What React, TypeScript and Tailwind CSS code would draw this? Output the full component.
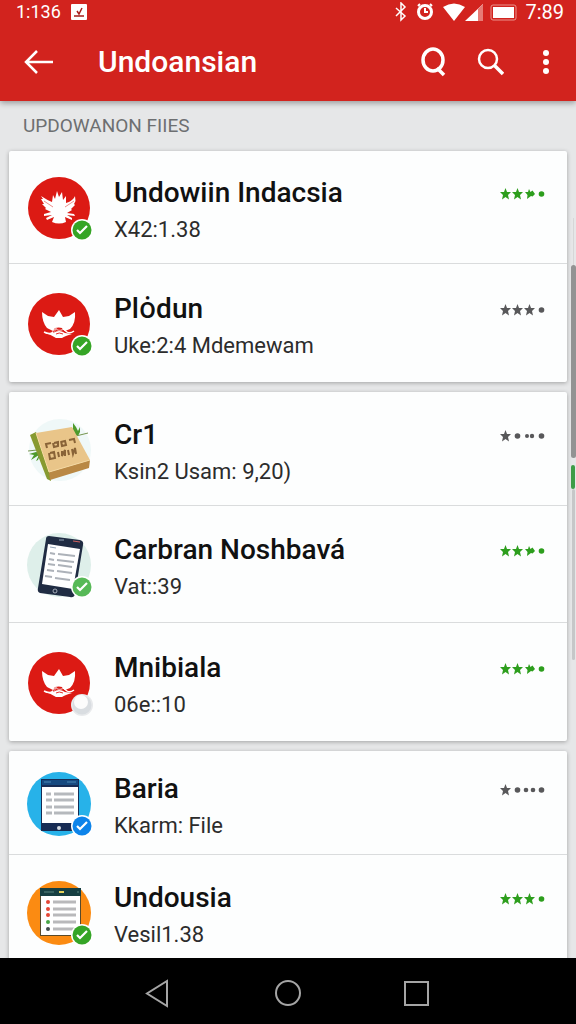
import React from 'react'
import clsx from 'clsx'

type Mark = 'star' | 'half' | 'dot' | 'pair' | 'twin'
type Emblem = 'eagle' | 'crest' | 'box' | 'phone' | 'sheet' | 'list'
type Badge = 'green' | 'light' | 'blue' | 'empty'

interface FileItem {
  title: string
  detail: string
  emblem: Emblem
  badge?: Badge
  marks: Mark[]
  active?: boolean
  size: string
}

const groups: FileItem[][] = [
  [
    {
      title: 'Undowiin Indacsia',
      detail: 'X42:1.38',
      emblem: 'eagle',
      badge: 'green',
      marks: ['star', 'star', 'half', 'dot'],
      active: true,
      size: 'h-[113px]'
    },
    {
      title: 'Plȯdun',
      detail: 'Uke:2:4 Mdemewam',
      emblem: 'crest',
      badge: 'green',
      marks: ['star', 'star', 'star', 'dot'],
      size: 'h-[118px]'
    }
  ],
  [
    {
      title: 'Cr1',
      detail: 'Ksin2 Usam: 9,20)',
      emblem: 'box',
      marks: ['star', 'dot', 'pair', 'dot'],
      size: 'h-[114px]'
    },
    {
      title: 'Carbran Noshbavá',
      detail: 'Vat::39',
      emblem: 'phone',
      badge: 'light',
      marks: ['star', 'star', 'half', 'dot'],
      active: true,
      size: 'h-[117px]'
    },
    {
      title: 'Mnibiala',
      detail: '06e::10',
      emblem: 'crest',
      badge: 'empty',
      marks: ['star', 'star', 'half', 'dot'],
      active: true,
      size: 'h-[118px]'
    }
  ],
  [
    {
      title: 'Baria',
      detail: 'Kkarm: File',
      emblem: 'sheet',
      badge: 'blue',
      marks: ['star', 'dot', 'twin', 'dot'],
      size: 'h-[104px]'
    },
    {
      title: 'Undousia',
      detail: 'Vesil1.38',
      emblem: 'list',
      badge: 'green',
      marks: ['star', 'star', 'star', 'dot'],
      active: true,
      size: 'h-[114px]'
    }
  ]
]

const badgeColors: Record<Badge, string> = {
  green: '#35a526',
  light: '#57b957',
  blue: '#0d84ea',
  empty: '#d9dde1'
}

const Eagle = () => (
  <>
    <circle cx="31" cy="32" r="31" fill="#dc1a14" />
    <path
      fill="#fff"
      d="M24 26 25 19 27 23 29 15 31 21 34 16 35 24 38 20 38 27C42 26 46 23 47 20L47.500 25 46 28 47 29 43 33 44 34 39 37 46 38 47 40 39 39 44 42 44 44 37 41 38 46Q31 49 24 46L26 41 19 44 18 42 24 39 16 40 16 38 23 36 17 33 18 32 14 28 16 28 13 23 15 23 13 20Q19 24 24 26Z"
    />
    <path d="M16 25 25 31M46 25 37 31" stroke="#dc1a14" strokeWidth=".5" />
  </>
)

const Crest = () => (
  <>
    <circle cx="31" cy="32" r="31" fill="#dc1a14" />
    <path
      fill="#fff"
      d="M14 20 20 24 26 25 31 18 35 25 41 24 47 20Q48 31 42 37L37 39 34 36Q31 35 27 36L25 39 19 36Q14 30 14 20Z"
    />
    <path d="M16 40Q22 43 25 40L28 37Q32 40 35 37L39 40Q42 42 46 39" fill="none" stroke="#fff" strokeWidth="1.500" />
    <path fill="#fff" d="M17 41 25 41Q31 37 37 41L44 42Q37 44 34 46L28 46Q24 43 17 41Z" />
    <path d="M25 40Q27 37 31 38Q35 37 37 40M28 42Q31 40 35 42" fill="none" stroke="#dc1a14" strokeWidth=".9" />
  </>
)

const Box = () => (
  <>
    <circle cx="32" cy="32" r="31" fill="#eff8f8" />
    <path fill="#4e9a2c" d="M46 17 43 10 45 11 45 5 48 9 50 13 52 9 52 14 50 18ZM8 34 1 36 6 37 3 42 11 37 8 43 10 42 13 35Z" />
    <path d="M48 18 60 15M0 33 9 32" stroke="#75954f" />
    <path fill="#879a31" d="M2 17 8 14 22 51 23 63 19 61Z" />
    <path fill="#e9c589" d="M8 15 44 9 62 42 21 54Z" />
    <path fill="#b98844" d="M21 54 62 42 61 50 22 62Z" />
    <path d="M8 15 21 54 62 42" fill="none" stroke="#f5d9a2" />
    <path
      d="m19 30-1-4 5-1m3 0 4-1v4l-4 1-1-4m8-1 4-1 1 4-4 1-1-5m8-1 5-1 1 4M22 35l4-1 1 6-5 1-1-6m9-1 1 5m3-6v5l3-6v6m3-6 1 5m3-6 1 5 2-6 1 6"
      fill="none"
      stroke="#896337"
      strokeWidth="2"
    />
  </>
)

const Phone = () => (
  <>
    <circle cx="31" cy="32" r="32" fill="#deefea" />
    <path
      fill="#202c43"
      d="M21 3 52 7Q56 8 55 12L47 61Q46 65 42 64L12 60Q9 59 10 55L18 6Q18 3 21 3Z"
    />
    <path fill="#fff" d="m20 11 32 5-7 40-31-5Z" />
    <path d="m22 14 6 1M31 7h5" stroke="#93a4b8" />
    <path d="m22 20 5 1m3 0 17 2M21 26l5 1m3 0 17 2M20 31l7 1m3 0 14 2M19 37l7 1m3 0 15 2M17 43l7 1m3 1 15 2" stroke="#adb2b9" strokeWidth="2" />
    <path d="m45 8 7 1" stroke="#d2605d" />
    <circle cx="27" cy="58" r="2" fill="none" stroke="#c4ccd4" strokeWidth=".8" />
  </>
)

const Sheet = () => (
  <>
    <circle cx="31" cy="32" r="32" fill="#27b2e9" />
    <path fill="#172c54" d="M13 7h38v52H13z" />
    <path fill="#174a80" d="M14 8h36v5H14z" />
    <path fill="#fff" d="M14 15h36v36H14z" />
    <path d="M16 10h7m16 0h9" stroke="#4c89b6" />
    <path d="M18 22h5m3 0h20M18 28h6m2 0h20M18 35h6m2 0h20M18 41h6m2 0h20" stroke="#b6b9bd" strokeWidth="3" />
    <circle cx="31" cy="56" r="2" fill="#d4dbe1" />
  </>
)

const List = () => (
  <>
    <circle cx="31" cy="32" r="32" fill="#fb8b12" />
    <path fill="#594a2b" d="M12 7h41v48H12z" />
    <path fill="#fff" d="M13 14h39v40H13z" />
    <path fill="#173f42" d="M12 7h41v8H12z" />
    <path d="M16 11h10M49 11h2" stroke="#5d8880" />
    <path d="M31 11h5" stroke="#e6d35a" strokeWidth="2" />
    <path d="M25 21h23M25 28h23M25 34h23M25 41h23M25 48h23" stroke="#b9b9bb" strokeWidth="3" />
    <g fill="#e54634">
      <circle cx="20" cy="21" r="2" />
      <circle cx="20" cy="28" r="2" />
      <circle cx="20" cy="34" r="2" />
    </g>
    <circle cx="20" cy="41" r="2" fill="#48a645" />
    <circle cx="20" cy="48" r="2" fill="#414b4b" />
  </>
)

const emblems: Record<Emblem, React.FC> = {
  eagle: Eagle,
  crest: Crest,
  box: Box,
  phone: Phone,
  sheet: Sheet,
  list: List
}

const Avatar: React.FC<{ emblem: Emblem; badge?: Badge }> = ({ emblem, badge }) => {
  const Drawing = emblems[emblem]

  return (
    <svg viewBox="-1 -1 66 66" className="size-[66px] shrink-0" aria-hidden="true">
      <Drawing />
      {badge && (
        <g>
          <circle cx="54" cy="54" r="11" fill={badge === 'empty' ? '#e8eaec' : '#fff'} />
          <circle cx="54" cy="54" r="9.500" fill={badgeColors[badge]} />
          {badge === 'empty' ? (
            <circle cx="53" cy="51" r="7" fill="#fcfcfc" />
          ) : (
            <path d="m49 54 3 3 7-7" fill="none" stroke="#fff" strokeWidth="2.200" />
          )}
        </g>
      )}
    </svg>
  )
}

const Rating: React.FC<{ marks: Mark[]; active?: boolean }> = ({ marks, active }) => (
  <svg
    viewBox="0 0 48 12"
    className={clsx('mt-[14px] h-3 w-12 shrink-0', active ? 'text-[#2d9e1d]' : 'text-[#58585a]')}
    fill="currentColor"
    role="img"
    aria-label={`${marks.filter((mark) => mark === 'star').length} / ${marks.length}`}
  >
    {marks.map((mark, i) => (
      <g key={i} transform={`translate(${i * 12} 0)`}>
        {mark === 'star' && <path d="m5.500 0 1.500 4H11L8 7l1 4.500-3.500-2.500L2 11.500 3 7 0 4h4Z" />}
        {mark === 'half' && <path d="m5 1 1.500 3 2-1.500L11 6 8.500 8.500 7 8l-4 3 .5-4L1 4h3Z" />}
        {mark === 'dot' && <circle cx="5.500" cy="6" r="2.800" />}
        {mark === 'pair' && (
          <>
            <circle cx="3" cy="6" r="2" />
            <circle cx="8" cy="6" r="2.200" />
          </>
        )}
        {mark === 'twin' && (
          <>
            <circle cx="2" cy="6" r="2.300" />
            <circle cx="9" cy="6" r="2.300" />
          </>
        )}
      </g>
    ))}
  </svg>
)

const FileRow: React.FC<{ item: FileItem }> = ({ item }) => (
  <li className={clsx('flex items-center pt-[2px] pr-[19px] pl-[18px]', item.size)}>
    <Avatar emblem={item.emblem} badge={item.badge} />
    <div className="ml-[21px] flex min-w-0 flex-1 items-start justify-between pt-[6px]">
      <div className="min-w-0">
        <h2 className="truncate text-[28px] leading-[38px] font-medium text-[#111]">{item.title}</h2>
        <p className="truncate text-[22px] leading-9 text-[#2c2c2c]">{item.detail}</p>
      </div>
      <Rating marks={item.marks} active={item.active} />
    </div>
  </li>
)

const StatusBar = () => (
  <div className="flex h-6 items-center justify-between pr-3 pl-4 leading-6">
    <div className="flex items-center gap-[10px]">
      <span className="text-lg leading-6">1:136</span>
      <svg viewBox="0 0 16 16" className="size-4">
        <rect width="16" height="16" rx="1" fill="#fff" />
        <path d="M3 12h10M6 7l2 3 3-6" fill="none" stroke="#a51d19" strokeWidth="1.500" />
      </svg>
    </div>
    <div className="flex items-center gap-2">
      <svg viewBox="0 0 102 20" className="h-5 w-[122px]" preserveAspectRatio="xMaxYMid meet" fill="none" stroke="#fff">
        <path d="m-19 6 9 8-4 4V1l4 4-9 9" strokeWidth="1.500" />
        <circle cx="10" cy="10" r="6.500" strokeWidth="3" />
        <path d="M3 4 5 2m10 0 2 2M10 6v4h3" strokeWidth="2" />
        <path d="M28 5Q39-2 50 5L39 19Z" fill="#fff" stroke="none" />
        <path d="m50 19 18-17v17Z" fill="#fff" stroke="none" />
        <path d="M63 7 68 2v17h-5Z" fill="#e77b76" stroke="none" />
        <rect x="76" y="3" width="25" height="15" rx="2" stroke="#eb928c" />
        <path d="M78 5h21v11H78z" fill="#fff" stroke="none" />
      </svg>
      <span className="text-xl leading-6">7:89</span>
    </div>
  </div>
)

const AppBar = () => (
  <header className="relative z-10 shrink-0 bg-[#d2231e] text-white shadow-[0_2px_6px_rgba(0,0,0,0.35)]">
    <StatusBar />
    <div className="flex h-[77px] items-center pr-4 pb-[2px] pl-6">
      <button type="button" aria-label="Back" className="mr-11">
        <svg viewBox="0 0 30 26" className="h-[26px] w-[30px]" fill="none" stroke="currentColor" strokeWidth="2.500">
          <path d="M29 13H2M13 2 2 13l11 11" />
        </svg>
      </button>
      <h1 className="min-w-0 flex-1 truncate text-[30px] leading-10 font-medium">Undoansian</h1>
      <button type="button" aria-label="Find" className="mr-7">
        <svg viewBox="0 0 28 30" className="h-[30px] w-7" fill="none" stroke="currentColor" strokeWidth="3.500">
          <ellipse cx="13" cy="13" rx="10" ry="11" />
          <path d="m17 21 7 7" />
        </svg>
      </button>
      <button type="button" aria-label="Search" className="mr-7">
        <svg viewBox="0 0 28 28" className="size-7" fill="none" stroke="currentColor" strokeWidth="2.500">
          <circle cx="12" cy="11" r="9" />
          <path d="m18 17 9 9" strokeWidth="3.500" />
        </svg>
      </button>
      <button type="button" aria-label="More options">
        <svg viewBox="0 0 28 28" className="size-7" fill="currentColor">
          <circle cx="14" cy="5" r="3" />
          <circle cx="14" cy="14" r="3" />
          <circle cx="14" cy="23" r="3" />
        </svg>
      </button>
    </div>
  </header>
)

const NavBar = () => (
  <nav className="flex h-[66px] shrink-0 items-center justify-center gap-[98px] bg-black pt-1 text-[#a5a5a5]">
    <button type="button" aria-label="Back">
      <svg viewBox="0 0 30 30" className="size-[30px]" fill="none" stroke="currentColor" strokeWidth="2">
        <path d="M22 3v25L2 15.500Z" />
      </svg>
    </button>
    <button type="button" aria-label="Home">
      <svg viewBox="0 0 30 30" className="size-[30px]" fill="none" stroke="currentColor" strokeWidth="2">
        <circle cx="15" cy="15" r="12" />
      </svg>
    </button>
    <button type="button" aria-label="Recent apps">
      <svg viewBox="0 0 30 30" className="size-[30px]" fill="none" stroke="currentColor" strokeWidth="2">
        <path d="M4 4h23v23H4z" />
      </svg>
    </button>
  </nav>
)

const ScrollTrack = () => (
  <div className="absolute top-[117px] right-0 flex w-[6px] flex-col items-center" aria-hidden="true">
    <div className="h-[47px] w-px bg-[#d6d7d7]" />
    <div className="h-[193px] w-[5px] rounded-full bg-[#929393]" />
    <div className="mt-[7px] h-6 w-1 rounded-full bg-[#3e9c47]" />
    <div className="h-[171px] w-[3px] rounded-full bg-[#c6c7c8]" />
  </div>
)

export default function App() {
  return (
    <div className="flex h-screen flex-col bg-[#e6e7e8] font-['Roboto','Noto_Sans',sans-serif]">
      <AppBar />
      <main className="relative min-h-0 flex-1 overflow-hidden">
        <p className="h-[50px] pl-[23px] text-[19px] leading-[50px] text-[#6d6f71]">UPDOWANON FIIES</p>
        <div className="flex flex-col gap-[10px] px-[9px]">
          {groups.map((group) => (
            <ul
              key={group[0].title}
              className="divide-y divide-[#dadcdd] rounded-xs bg-[#fdfefe] shadow-[0_1px_4px_rgba(0,0,0,0.3)]"
            >
              {group.map((item) => (
                <FileRow key={item.title} item={item} />
              ))}
            </ul>
          ))}
        </div>
        <ScrollTrack />
      </main>
      <NavBar />
    </div>
  )
}
